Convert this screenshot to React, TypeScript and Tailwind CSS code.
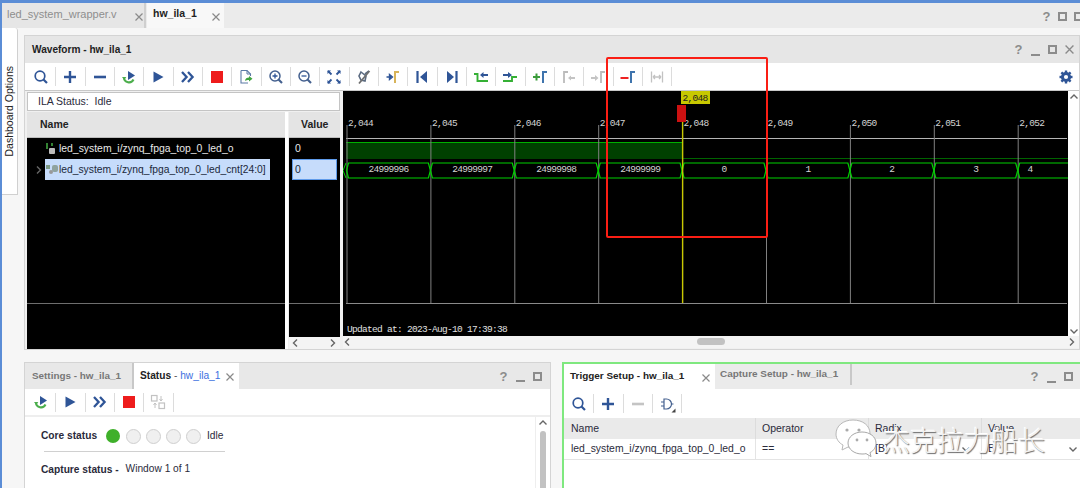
import React from "react";

const B = "#2f5597";
const Svg = ({ children, s = 18 }: { children: React.ReactNode; s?: number }) => (
  <svg width={s} height={s} viewBox="0 0 18 18" fill="none">{children}</svg>
);
const Search = () => <Svg><circle cx="8" cy="8" r="4.8" stroke={B} strokeWidth="1.7" /><path d="M11.5 11.5l3.500 3.500" stroke={B} strokeWidth="2.2" /></Svg>;
const Plus = () => <Svg><path d="M9 3v12M3 9h12" stroke={B} strokeWidth="2.4" /></Svg>;
const Minus = ({ c = B }: { c?: string }) => <Svg><path d="M3 9h12" stroke={c} strokeWidth="2.6" /></Svg>;
const Rerun = () => <Svg><path d="M4 9.5a5 5 0 0 0 9.500 2" stroke="#4cae4c" strokeWidth="2.1" /><path d="M2 9l2.200 3L6.300 9z" fill="#4cae4c" /><path d="M8 3l7 4.500L8 12z" fill={B} /></Svg>;
const Play = () => <Svg><path d="M4.500 3.500l10 5.500-10 5.500z" fill={B} /></Svg>;
const Fast = () => <Svg><path d="M3 4l4.600 5L3 14M9 4l4.600 5L9 14" stroke={B} strokeWidth="2.3" /></Svg>;
const Stop = () => <Svg><rect x="3" y="3" width="12" height="12" fill="#ee1c1c" /></Svg>;
const Export = () => <Svg><path d="M4 2.500h6l3.500 3.500v2M4 2.500v12.500h7" stroke="#5c7aa6" strokeWidth="1.1" /><path d="M10 2.500v3.500h3.500" stroke="#5c7aa6" /><path d="M8 13c0-2.500 2-3.500 4-3.500V8l3.500 2.800L12 13.500V12c-1.500 0-3 0-4 1z" fill="#3fa33f" /></Svg>;
const ZoomIn = () => <Svg><circle cx="8" cy="8" r="5" stroke="#44608f" strokeWidth="1.5" /><path d="M5.500 8h5M8 5.500v5" stroke={B} strokeWidth="1.3" /><path d="M11.500 11.500l3.500 3.500" stroke="#44608f" strokeWidth="2.1" /></Svg>;
const ZoomOut = () => <Svg><circle cx="8" cy="8" r="5" stroke="#44608f" strokeWidth="1.5" /><path d="M5.500 8h5" stroke={B} strokeWidth="1.3" /><path d="M11.500 11.500l3.500 3.500" stroke="#44608f" strokeWidth="2.1" /></Svg>;
const Fit = () => <Svg><path d="M3 3l3.500 3.500M15 3l-3.500 3.500M3 15l3.500-3.500M15 15l-3.500-3.500" stroke={B} strokeWidth="1.8" /><path d="M2.500 2.500h3.500L2.500 6zM15.500 2.500H12L15.500 6zM2.500 15.500H6L2.500 12zM15.500 15.500H12l3.500-3.500z" fill={B} /></Svg>;
const Unlink = () => <Svg><path d="M6 4l5 4-1 5-4-1-2-4zM10 6l4-3" stroke="#5a6a80" strokeWidth="1.6" /><path d="M14.500 3L4 15.500" stroke="#6f6f6f" strokeWidth="1.8" /></Svg>;
const ToEdge = () => <Svg><path d="M2.500 9h4M5.500 6.500L8.500 9l-3 2.500z" fill={B} stroke={B} strokeWidth="1.4" /><path d="M11 15V4h4" stroke="#d8b45a" strokeWidth="2" /></Svg>;
const First = () => <Svg><path d="M4.500 3v12" stroke={B} strokeWidth="2.2" /><path d="M14 3v12L7 9z" fill={B} /></Svg>;
const Last = () => <Svg><path d="M13.500 3v12" stroke={B} strokeWidth="2.2" /><path d="M4 3v12l7-6z" fill={B} /></Svg>;
const PrevG = () => <Svg><path d="M2 6h3.500v7H16" stroke="#35b035" strokeWidth="1.9" /><path d="M8 7l3.500-3v2H16v2h-4.500v2z" fill={B} /></Svg>;
const NextG = () => <Svg><path d="M2 13h9V9h5" stroke="#35b035" strokeWidth="1.9" /><path d="M2 6h5V4l4 3-4 3V8H2z" fill={B} /></Svg>;
const AddM = () => <Svg><path d="M2 9h7M5.500 5.500v7" stroke="#3b9c3b" strokeWidth="2" /><path d="M12 15V4h4" stroke="#3f74ad" strokeWidth="2" /></Svg>;
const PrevM = () => <Svg><path d="M4 15V4h4" stroke="#bbb" strokeWidth="1.8" /><path d="M8 10l3-2.500V9h4v2h-4v1.500z" fill="#c4c4c4" /></Svg>;
const NextM = () => <Svg><path d="M12 15V4h4" stroke="#bbb" strokeWidth="1.8" /><path d="M2 9h4V7l3.500 3L6 13v-2H2z" fill="#c4c4c4" /></Svg>;
const DelM = () => <Svg><path d="M1.500 10h8" stroke="#ee2222" strokeWidth="2" /><path d="M12 15V4h4" stroke="#3f74ad" strokeWidth="2" /></Svg>;
const Span = () => <Svg><path d="M3.500 3.500v11M14.500 3.500v11M5 9h8M5 9l2-2M5 9l2 2M13 9l-2-2M13 9l-2 2" stroke="#c2c2c2" strokeWidth="1.3" /></Svg>;
const Swap = () => <Svg><rect x="2.500" y="2.500" width="5.500" height="5.500" stroke="#c2c2c2" strokeWidth="1.2" /><rect x="10" y="10" width="5.500" height="5.500" stroke="#c2c2c2" strokeWidth="1.2" /><path d="M12 3v5M10.500 6l1.500 2 1.500-2M6 10v5M4.500 12L6 10l1.500 2" stroke="#c2c2c2" /></Svg>;
const Gate = () => (
  <svg width="18" height="18" viewBox="0 0 18 18" fill="none">
    <path d="M6 4h2.500a5 5 0 0 1 0 10H6z" stroke="#44608f" strokeWidth="1.2" />
    <path d="M3 7h3M3 11h3M13.500 9h2" stroke="#44608f" strokeWidth="1.1" />
    <path d="M17.500 17.500h-4l4-4z" fill="#444" />
  </svg>
);
const Gear = () => (
  <svg width="14" height="14" viewBox="0 0 14 14">
    <circle cx="7" cy="7" r="3.800" fill="none" stroke={B} strokeWidth="2.6" />
    {[0, 45, 90, 135].map((a) => <rect key={a} x="5.800" y="0.500" width="2.400" height="13" fill={B} transform={`rotate(${a} 7 7)`} />)}
    <circle cx="7" cy="7" r="2.100" fill="#fff" />
  </svg>
);

const Btn = ({ children }: { children: React.ReactNode }) => (
  <div className="w-[29.33px] h-[19px] flex items-center justify-center border-r border-[#dcdcdc] shrink-0">{children}</div>
);

const Help = () => <span className="text-[13px] font-bold leading-none w-[9px] text-center text-[#8c8c8c]">?</span>;
const MinI = () => <span className="w-[9px] h-[9px] border-b-2 border-[#8c8c8c] block mb-[-3px]" />;
const MaxI = () => <span className="w-[9px] h-[9px] border-2 border-[#8c8c8c] block" />;
const CloseX = ({ size = 8 }: { size?: number }) => (
  <svg width={size} height={size} viewBox="0 0 8 8"><path d="M.5.5l7 7M7.5.5l-7 7" stroke="#8a8a8a" strokeWidth="1.2" /></svg>
);
const Chev = ({ d }: { d: "l" | "r" | "u" | "d" }) => {
  const p = { l: "M6 1.500L2.500 5 6 8.500", r: "M3 1.500L6.500 5 3 8.500", u: "M1.500 6.500L5 3l3.500 3.500", d: "M1.500 3.500L5 7l3.500-3.500" }[d];
  return <svg width="10" height="10" viewBox="0 0 10 10"><path d={p} stroke="#666" strokeWidth="1.4" fill="none" /></svg>;
};

const X0 = 3.500;
const STEP = 83.900;
const tickX = (i: number) => X0 + STEP * i;
const labels = ["2,044", "2,045", "2,046", "2,047", "2,048", "2,049", "2,050", "2,051", "2,052"];
const vals = ["24999996", "24999997", "24999998", "24999999", "0", "1", "2", "3", "4"];
const MONO = "'Liberation Mono', monospace";

const Wave = () => {
  const w = 725;
  const top = 72, bot = 87, mid = 79.500;
  const G = "#00d000";
  return (
    <svg width={w} height="245" viewBox="0 0 725 245" className="block bg-black">
      <line x1="3" x2="724" y1="47.500" y2="47.500" stroke="#b5b5b5" />
      <line x1="3" x2="724" y1="212.500" y2="212.500" stroke="#8a8a8a" />
      <rect x="3" y="51" width={tickX(4) - 3} height="17" fill="#004000" />
      <path d={`M3 51.500H${tickX(4)}`} stroke="#00b000" />
      <path d={`M${tickX(4)} 67.500H725`} stroke="#006400" />
      {labels.map((l, i) => (
        <g key={l}>
          <line x1={tickX(i) + 0.500} x2={tickX(i) + 0.500} y1="34" y2="212" stroke="#808080" />
          <text x={tickX(i) + 1.500} y="35" fontFamily={MONO} fontSize="9.500" letterSpacing="-0.700" fill="#d4d4d4">{l}</text>
        </g>
      ))}
      {vals.map((v, i) => {
        const a = tickX(i), b = tickX(i + 1);
        const last = i === 8;
        const e = b - 2;
        const m = (a + b) / 2;
        return (
          <g key={v}>
            <path d={last ? `M${a} ${mid}L${a + 2} ${top}H${w}M${a} ${mid}L${a + 2} ${bot}H${w}` : `M${a} ${mid}L${a + 2} ${top}H${e}L${b} ${mid}L${e} ${bot}H${a + 2}Z`} stroke={G} strokeWidth="1.200" fill="none" />
            <text x={last ? 687 : m} y="80.500" textAnchor="middle" fontFamily={MONO} fontSize="9.500" letterSpacing="-0.700" fill="#d4d4d4">{v}</text>
          </g>
        );
      })}
      <path d={`M0 ${mid}L3 ${top}M0 ${mid}L3 ${bot}`} stroke={G} />
      <line x1={tickX(4) + 0.500} x2={tickX(4) + 0.500} y1="30" y2="212" stroke="#c8c800" strokeWidth="1.400" />
      <rect x="334" y="14" width="9" height="17" fill="#cc1111" />
      <rect x="338" y="0" width="29" height="13" fill="#c8c800" />
      <text x="339.500" y="9.500" fontFamily={MONO} fontSize="9.500" letterSpacing="-0.700" fill="#222">2,048</text>
      <text x="4" y="241" fontFamily={MONO} fontSize="9.500" letterSpacing="-0.700" fill="#e0e0e0">Updated at: 2023-Aug-10 17:39:38</text>
    </svg>
  );
};

export default function App() {
  return (
    <div className="relative w-[1080px] h-[488px] overflow-hidden bg-[#f6f6f6] flex flex-col text-[10.5px] text-[#2b2b3b]" style={{ fontFamily: "'Liberation Sans', Arial, sans-serif" }}>
      <div className="h-[3px] bg-[#5b8dd6] shrink-0" />
      <div className="flex flex-1 min-h-0">
        <div className="w-[2px] bg-[#5b8dd6] shrink-0" />
        <div className="flex-1 min-w-0 flex flex-col">
          {/* top tabs */}
          <div className="h-[25px] bg-[#ebebeb] flex items-stretch shrink-0">
            <div className="w-[144px] flex items-center pl-[5px] bg-[#e6e6e6] border-r-2 border-[#cfcfcf] text-[#8e8e8e] text-[11px] whitespace-nowrap">
              <span className="mt-[-3px]">led_system_wrapper.v</span>
              <span className="ml-[19px] mt-[2px]"><CloseX /></span>
            </div>
            <div className="ml-[1px] w-[77px] bg-[#f8f8f8] flex items-center pl-[6px] font-bold text-[#222] whitespace-nowrap">
              <span className="mt-[-3px]">hw_ila_1</span>
              <span className="ml-[15px] mt-[2px]"><CloseX /></span>
            </div>
            <div className="ml-auto flex items-center gap-[7px] translate-x-[3px] mt-[2px]">
              <Help /><MaxI /><MaxI />
            </div>
          </div>
          {/* Main zone */}
          <div className="flex h-[322px] shrink-0">
            <div className="w-[16px] h-[167px] bg-white border-r border-b border-[#d0d0d0] rounded-tr-[3px] flex items-center justify-center shrink-0">
              <span className="text-[10.5px] text-[#222] whitespace-nowrap [writing-mode:vertical-rl] rotate-180">Dashboard Options</span>
            </div>
            <div className="ml-[6px] mt-[7px] flex-1 min-w-0 h-[315px] border border-[#d4d4d4] bg-[#f0f0f0] flex flex-col">
              <div className="h-[27px] bg-[#e6e6e6] flex items-center pl-[7px] shrink-0">
                <span className="font-bold text-[10.1px] text-[#222]">Waveform - hw_ila_1</span>
                <div className="ml-auto flex items-center gap-[8px] pr-[5px]">
                  <Help /><MinI /><MaxI /><CloseX size={9} />
                </div>
              </div>
              <div className="h-[28px] bg-white flex items-center pl-[2px] border-b border-[#c8c8c8] shrink-0">
                <Btn><Search /></Btn><Btn><Plus /></Btn><Btn><Minus /></Btn><Btn><Rerun /></Btn><Btn><Play /></Btn><Btn><Fast /></Btn><Btn><Stop /></Btn><Btn><Export /></Btn><Btn><ZoomIn /></Btn><Btn><ZoomOut /></Btn><Btn><Fit /></Btn><Btn><Unlink /></Btn><Btn><ToEdge /></Btn><Btn><First /></Btn><Btn><Last /></Btn><Btn><PrevG /></Btn><Btn><NextG /></Btn><Btn><AddM /></Btn><Btn><PrevM /></Btn><Btn><NextM /></Btn><Btn><DelM /></Btn><Btn><Span /></Btn>
                <div className="ml-auto pr-[6px]"><Gear /></div>
              </div>
              <div className="flex flex-1 min-h-0">
                <div className="w-[314px] ml-[2px] flex flex-col shrink-0">
                  <div className="h-[19px] mt-[1px] mr-[1px] bg-white border border-[#c4c4c4] flex items-center pl-[10px] shrink-0">ILA Status:&nbsp; Idle</div>
                  <div className="flex flex-1 min-h-0 mt-[1px]">
                    <div className="w-[258px] flex flex-col">
                      <div className="h-[26px] bg-[#e4e4e4] flex items-center pl-[13px] font-bold text-[#222] border-b border-[#bcbcbc] shrink-0">Name</div>
                      <div className="flex-1 bg-black text-[#e8e8e8] flex flex-col">
                        <div className="h-[21px] flex items-center pl-[18px] gap-[2px] whitespace-nowrap">
                          <svg width="12" height="13" viewBox="0 0 12 13" className="shrink-0"><path d="M2 1v6M7 1v3" stroke="#3fa33f" strokeWidth="1.600" /><rect x="4" y="6" width="6" height="6" rx="1" fill="#bbb" /></svg>
                          <span className="text-[10.4px]">led_system_i/zynq_fpga_top_0_led_o</span>
                        </div>
                        <div className="h-[21px] flex items-center pl-[7px]">
                          <Chev d="r" />
                          <div className="h-[21px] w-[225px] ml-[1px] bg-[#c6dcfb] text-[#20283a] flex items-center whitespace-nowrap">
                            <svg width="14" height="12" viewBox="0 0 14 12" className="shrink-0"><rect x="1" y="1" width="4" height="4" fill="#7d9a85" /><rect x="7" y="1" width="6" height="7" rx="2" fill="#8fa3a0" /><circle cx="6" cy="8" r="2" fill="#999" /></svg>
                            <span className="text-[10.3px]">led_system_i/zynq_fpga_top_0_led_cnt[24:0]</span>
                          </div>
                        </div>
                        <div className="h-[124px] border-b border-[#6e6e6e]" />
                      </div>
                    </div>
                    <div className="w-[3px] bg-white" />
                    <div className="w-[51px] flex flex-col ml-[1px]">
                      <div className="h-[26px] bg-[#e4e4e4] flex items-center pl-[12px] font-bold text-[#222] border-b border-[#bcbcbc] shrink-0">Value</div>
                      <div className="flex-1 bg-black text-[#e8e8e8] flex flex-col">
                        <div className="h-[21px] flex items-center pl-[6px]">0</div>
                        <div className="h-[21px] mx-[3px] bg-[#c6dcfb] border border-[#5f9bea] text-[#20283a] flex items-center pl-[2px]">0</div>
                        <div className="h-[124px] border-b border-[#6e6e6e]" />
                      </div>
                      <div className="h-[12px] bg-[#f4f4f4] flex justify-between items-center px-[2px] shrink-0"><Chev d="l" /><Chev d="r" /></div>
                    </div>
                  </div>
                </div>
                <div className="flex-1 min-w-0 ml-[2px] flex flex-col">
                  <div className="flex h-[245px] shrink-0">
                    <Wave />
                    <div className="flex-1 bg-white flex flex-col items-center justify-between pt-[1px]"><Chev d="u" /><Chev d="d" /></div>
                  </div>
                  <div className="h-[12px] bg-[#f4f4f4] flex items-center justify-between pr-[2px] relative">
                    <Chev d="l" />
                    <div className="absolute left-[354px] top-[2px] w-[28px] h-[7px] rounded-full bg-[#c2c2c2]" />
                    <Chev d="r" />
                  </div>
                </div>
              </div>
            </div>
          </div>
          {/* Bottom */}
          <div className="flex flex-1 min-h-0 pl-[22px] mt-[12px]">
            <div className="w-[527px] bg-white border-l border-t border-r border-[#d4d4d4] flex flex-col shrink-0">
              <div className="h-[26px] bg-[#e8e8e8] flex items-stretch shrink-0">
                <div className="w-[109px] flex items-center pl-[7px] text-[#777] border-r-2 border-[#c8c8c8] font-bold text-[9.9px] whitespace-nowrap"><span>Settings - hw_ila_1</span></div>
                <div className="w-[105px] bg-white flex items-center pl-[6px] whitespace-nowrap text-[10.2px]">
                  <span className="font-bold text-[#222]">Status</span><span className="text-[#555]">&nbsp;-&nbsp;</span><span className="text-[#3b6fe0]">hw_ila_1</span>
                  <span className="ml-[6px] mt-[2px]"><CloseX /></span>
                </div>
                <div className="ml-auto flex items-center gap-[8px] pr-[8px]"><Help /><MinI /><MaxI /></div>
              </div>
              <div className="h-[28px] flex items-center pl-[2px] border-b-2 border-[#eeeeee] shrink-0">
                <Btn><Rerun /></Btn><Btn><Play /></Btn><Btn><Fast /></Btn><Btn><Stop /></Btn><Btn><Swap /></Btn>
              </div>
              <div className="flex flex-1 min-h-0">
                <div className="flex-1 pl-[16px] pt-[11px] text-[10.2px]">
                  <div className="flex items-center h-[16px]">
                    <span className="font-bold w-[65px] text-[#2a2a3a] whitespace-nowrap">Core status</span>
                    <span className="w-[14px] h-[14px] rounded-full bg-[#3fb02a] mr-[6px]" />
                    {[0, 1, 2, 3].map((i) => <span key={i} className="w-[15px] h-[15px] rounded-full bg-[#f0f0f0] border border-[#cfcfcf] mr-[5px]" />)}
                    <span className="ml-[1px]">Idle</span>
                  </div>
                  <div className="w-[181px] ml-[3px] mt-[7px] border-t border-[#d0d0d0]" />
                  <div className="flex items-center mt-[10px]">
                    <span className="font-bold mr-[7px] text-[#2a2a3a] whitespace-nowrap">Capture status -</span>
                    <span className="mt-[-2px]">Window 1 of 1</span>
                  </div>
                </div>
                <div className="w-[15px] flex flex-col items-center border-l border-[#eeeeee] pt-[1px]">
                  <Chev d="u" />
                  <div className="w-[6px] flex-1 mt-[3px] bg-[#c2c2c2] rounded-t-[3px]" />
                </div>
              </div>
            </div>
            <div className="ml-[11px] flex-1 min-w-0 bg-white border-l-[2px] border-t-[2px] border-[#7fe87f] flex flex-col">
              <div className="h-[25px] bg-[#ebebeb] flex items-stretch shrink-0">
                <div className="w-[151px] bg-white flex items-center pl-[6px] font-bold text-[#222] text-[9.95px] whitespace-nowrap">
                  <span>Trigger Setup - hw_ila_1</span>
                  <span className="ml-[18px] mt-[2px]"><CloseX /></span>
                </div>
                <div className="w-[137px] flex items-center pl-[5px] font-bold text-[#777] border-r-2 border-[#c8c8c8] h-[21px] text-[9.95px] whitespace-nowrap"><span>Capture Setup - hw_ila_1</span></div>
                <div className="ml-auto flex items-center gap-[8px] pr-[7px]"><Help /><MinI /><MaxI /></div>
              </div>
              <div className="h-[29px] flex items-center pl-[1px] shrink-0">
                <Btn><Search /></Btn><Btn><Plus /></Btn><Btn><Minus c="#c4c4c4" /></Btn><Btn><Gate /></Btn>
              </div>
              <div className="grid grid-cols-[192px_113px_113px_1fr] h-[21px] bg-[#eaeaea] items-center shrink-0">
                <span className="pl-[7px] border-r border-[#dcdcdc] h-full flex items-center">Name</span>
                <span className="pl-[6px] border-r border-[#dcdcdc] h-full flex items-center">Operator</span>
                <span className="pl-[6px] border-r border-[#dcdcdc] h-full flex items-center">Radix</span>
                <span className="pl-[6px] h-full flex items-center">Value</span>
              </div>
              <div className="grid grid-cols-[192px_113px_113px_1fr] h-[21px] border-b border-[#e4e4e4] items-center shrink-0">
                <span className="pl-[7px] border-r border-[#e4e4e4] h-full flex items-center whitespace-nowrap text-[10.4px]">led_system_i/zynq_fpga_top_0_led_o</span>
                <span className="pl-[6px] border-r border-[#e4e4e4] h-full flex items-center">==</span>
                <span className="pl-[6px] border-r border-[#e4e4e4] h-full flex items-center justify-between pr-[10px]">[B]<Chev d="d" /></span>
                <span className="pl-[6px] h-full flex items-center justify-between pr-[2px]">B<Chev d="d" /></span>
              </div>
            </div>
          </div>
        </div>
      </div>
      {/* annotation */}
      <div className="absolute left-[606px] top-[57px] w-[162px] h-[181px] border-[2px] border-[#fa1e14] rounded-[2px] pointer-events-none" />
      {/* watermark */}
      <div className="absolute left-[835px] top-[419px] flex items-center pointer-events-none">
        <svg width="44" height="40" viewBox="0 0 44 40" className="mr-[4px]">
          <path d="M18 1C8 1 1 7 1 15c0 5 3 9 7 11l-1 5 6-3c2 .5 3 .6 5 .6 10 0 17-6 17-14S28 1 18 1z" fill="#fff" stroke="#b8b8b8" />
          <circle cx="12" cy="11" r="1.600" fill="#aaa" /><circle cx="24" cy="11" r="1.600" fill="#aaa" />
          <path d="M27 13c-8 0-14 5-14 11s6 11 14 11c1.500 0 3 0 4-.4l5 3-1-4c4-2 6-5.600 6-9.600 0-6-6-11-14-11z" fill="#fff" stroke="#a8a8a8" />
          <circle cx="22" cy="21" r="1.400" fill="#aaa" /><circle cx="32" cy="21" r="1.400" fill="#aaa" />
        </svg>
        <span className="text-[27px] leading-none text-[#f2f2f2] [text-shadow:1px_1px_1px_#666,-1px_-1px_0_#fff]" style={{ fontFamily: "'Noto Sans CJK SC', sans-serif", fontWeight: 300 }}>杰克拉力船长</span>
      </div>
    </div>
  );
}
